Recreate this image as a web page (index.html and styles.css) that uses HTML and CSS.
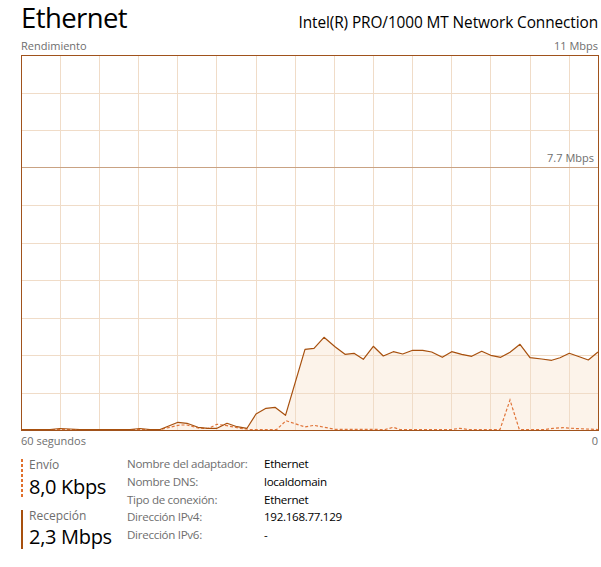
FILE: index.html
```html
<!DOCTYPE html>
<html lang="es">
<head>
<meta charset="utf-8">
<title>Ethernet</title>
<link rel="stylesheet" href="styles.css">
</head>
<body>
<div class="page">
  <header class="head">
    <h1 class="title">Ethernet</h1>
    <div class="model">Intel(R) PRO/1000 MT Network Connection</div>
  </header>
  <div class="axis axis-top"><span>Rendimiento</span><span>11 Mbps</span></div>
  <div class="chart">
    <svg class="plot" width="576" height="374" viewBox="22 56 576 374" xmlns="http://www.w3.org/2000/svg">
      <path class="fill" d="M22,429.5 L50,429.5 L60,428.5 L70,429 L80,429.5 L130,429.5 L140,428.5 L150,429.5 L160,429.5 L178,422.3 L187,423.3 L198,427.3 L208,428.3 L217,428.3 L227,423.3 L237,426.7 L247,428.3 L256,414 L266,408.3 L275,407.3 L285.5,415.3 L305,349.3 L314,348.3 L324,337.3 L335,346.7 L345,354.3 L354,353.3 L363.3,359.3 L373.3,346.3 L383.3,356 L393.3,351.7 L402.7,354 L412.7,350.3 L422.7,350.3 L431.7,352 L442.3,357.3 L451.7,351.7 L461.7,354.3 L471.7,356.3 L481.7,351.3 L490.7,355.3 L500.7,357.3 L510,352.3 L520,344.3 L530,357.7 L541.7,359 L551.7,360.3 L560,357.7 L569.3,353.3 L580,357 L588.3,360 L598,352 L598,430 L22,430 Z"/>
      <g class="grid">
        <path d="M60.5,56V430 M99.5,56V430 M138.5,56V430 M177.5,56V430 M216.5,56V430 M256.5,56V430 M295.5,56V430 M334.5,56V430 M373.5,56V430 M412.5,56V430 M451.5,56V430 M490.5,56V430 M530.5,56V430 M569.5,56V430"/>
        <path d="M22,93.5H598 M22,130.5H598 M22,205.5H598 M22,243.5H598 M22,280.5H598 M22,318.5H598 M22,355.5H598 M22,393.5H598"/>
      </g>
      <path class="limit" d="M22,167.5H598"/>
      <path class="send" d="M22,429.5 L160,429.5 L180,425 L187,425 L198,428 L208,428.5 L217,424.3 L227,425.7 L240,428.3 L250,429.5 L276.7,429.5 L286,420.7 L305,427 L314,425.3 L335,429.3 L385,429.5 L393.3,427.3 L400,429.5 L452,429.5 L460,428.3 L468,429.5 L500,429.5 L510,400 L519.3,429.5 L545,429.5 L553,428.3 L563,427.7 L575,428.5 L598,429.5"/>
      <path class="recv" d="M22,429.5 L50,429.5 L60,428.5 L70,429 L80,429.5 L130,429.5 L140,428.5 L150,429.5 L160,429.5 L178,422.3 L187,423.3 L198,427.3 L208,428.3 L217,428.3 L227,423.3 L237,426.7 L247,428.3 L256,414 L266,408.3 L275,407.3 L285.5,415.3 L305,349.3 L314,348.3 L324,337.3 L335,346.7 L345,354.3 L354,353.3 L363.3,359.3 L373.3,346.3 L383.3,356 L393.3,351.7 L402.7,354 L412.7,350.3 L422.7,350.3 L431.7,352 L442.3,357.3 L451.7,351.7 L461.7,354.3 L471.7,356.3 L481.7,351.3 L490.7,355.3 L500.7,357.3 L510,352.3 L520,344.3 L530,357.7 L541.7,359 L551.7,360.3 L560,357.7 L569.3,353.3 L580,357 L588.3,360 L598,352"/>
    </svg>
    <span class="mark">7.7 Mbps</span>
  </div>
  <div class="axis axis-bottom"><span>60 segundos</span><span>0</span></div>
  <section class="stats">
    <div class="rates">
      <div class="rate rate-send">
        <div class="rate-label">Envío</div>
        <div class="rate-value">8,0 Kbps</div>
      </div>
      <div class="rate rate-recv">
        <div class="rate-label">Recepción</div>
        <div class="rate-value">2,3 Mbps</div>
      </div>
    </div>
    <dl class="details">
      <dt>Nombre del adaptador:</dt><dd>Ethernet</dd>
      <dt>Nombre DNS:</dt><dd>localdomain</dd>
      <dt>Tipo de conexión:</dt><dd>Ethernet</dd>
      <dt>Dirección IPv4:</dt><dd>192.168.77.129</dd>
      <dt>Dirección IPv6:</dt><dd>-</dd>
    </dl>
  </section>
</div>
</body>
</html>
```

FILE: styles.css
```css
html, body {
  margin: 0;
  padding: 0;
  background: #ffffff;
}

body {
  font-family: "Open Sans", "Noto Sans", "Liberation Sans", sans-serif;
  color: #000000;
}

.page {
  padding: 0 3px 0 21px;
}

.head {
  display: flex;
  justify-content: space-between;
  align-items: baseline;
  height: 38px;
}

.title {
  margin: 0;
  font-size: 27.5px;
  font-weight: 400;
  line-height: 36px;
  letter-spacing: -0.6px;
}

.model {
  font-size: 15.4px;
  line-height: 20px;
  letter-spacing: -0.1px;
}

.axis {
  display: flex;
  justify-content: space-between;
  font-size: 11px;
  color: #6e6e6e;
}

.axis-top {
  height: 17px;
  line-height: 16px;
}

.axis-bottom {
  height: 16px;
  line-height: 17px;
  padding-top: 1px;
}

.chart {
  position: relative;
  width: 576px;
  height: 374px;
  border: 1px solid #a0521c;
}

.plot {
  display: block;
}

.fill {
  fill: #fcf3ea;
}

.grid path {
  stroke: #f0dcc8;
  stroke-width: 1;
  fill: none;
}

.limit {
  stroke: #c9a283;
  stroke-width: 1;
  fill: none;
}

.recv {
  fill: none;
  stroke: #a7500e;
  stroke-width: 1.2;
  stroke-linejoin: round;
}

.send {
  fill: none;
  stroke: #e0753a;
  stroke-width: 1.2;
  stroke-dasharray: 3 2;
}

.mark {
  position: absolute;
  right: 4px;
  top: 94px;
  font-size: 11px;
  color: #6e6e6e;
}

.stats {
  display: flex;
  padding-top: 8px;
}

.rates {
  width: 106px;
  display: flex;
  flex-direction: column;
  gap: 7px;
}

.rate {
  padding-left: 8px;
  background-repeat: no-repeat;
  background-position: 0 3px;
}

.rate-send {
  background-image: repeating-linear-gradient(to bottom, #e0702c 0 3px, transparent 3px 5px);
  background-size: 2px 38px;
}

.rate-recv {
  background-image: linear-gradient(#a7500e, #a7500e);
  background-size: 2px 39px;
}

.rate-label {
  font-size: 12px;
  line-height: 17.5px;
  color: #6e6e6e;
}

.rate-value {
  font-size: 20px;
  line-height: 26px;
  letter-spacing: -0.3px;
}

.details {
  margin: 1px 0 0;
  display: grid;
  grid-template-columns: 137px auto;
  grid-auto-rows: 17.8px;
  font-size: 11.6px;
  line-height: 14px;
  letter-spacing: -0.3px;
  align-content: start;
}

.details dt {
  color: #6e6e6e;
}

.details dd {
  margin: 0;
  color: #000000;
}
```
